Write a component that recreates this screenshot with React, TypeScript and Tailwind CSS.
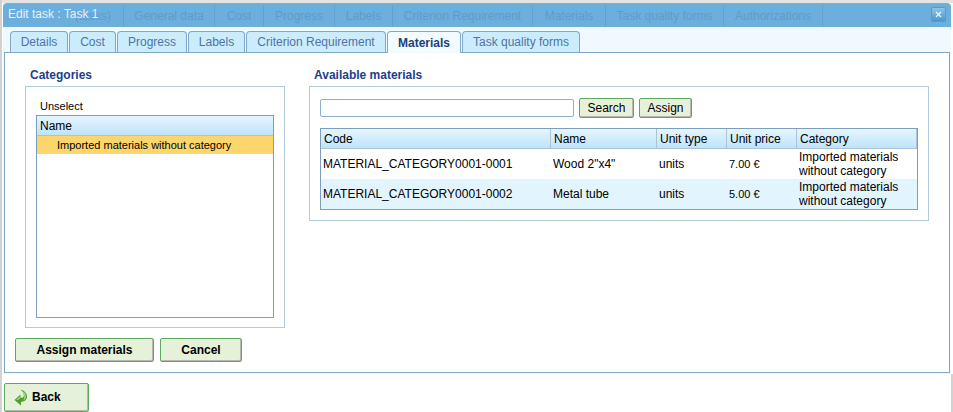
const ghostTabs = [
  { label: "(tasks)", width: "w-[121px]", align: "justify-end pr-[12px]" },
  { label: "General data", width: "w-[91px]", align: "justify-center" },
  { label: "Cost", width: "w-[49px]", align: "justify-center" },
  { label: "Progress", width: "w-[71px]", align: "justify-center" },
  { label: "Labels", width: "w-[58px]", align: "justify-center" },
  { label: "Criterion Requirement", width: "w-[140px]", align: "justify-center" },
  { label: "Materials", width: "w-[73px]", align: "justify-center" },
  { label: "Task quality forms", width: "w-[118px]", align: "justify-center" },
  { label: "Authorizations", width: "w-[99px]", align: "justify-center" },
];

const tabs = [
  { label: "Details", width: "w-[58px]" },
  { label: "Cost", width: "w-[47px]" },
  { label: "Progress", width: "w-[70px]" },
  { label: "Labels", width: "w-[57px]" },
  { label: "Criterion Requirement", width: "w-[140px]" },
  { label: "Materials", width: "w-[74px]", active: true },
  { label: "Task quality forms", width: "w-[118px]" },
];

const materials = [
  { code: "MATERIAL_CATEGORY0001-0001", name: 'Wood 2"x4"', unit: "units", price: "7.00 €" },
  { code: "MATERIAL_CATEGORY0001-0002", name: "Metal tube", unit: "units", price: "5.00 €" },
];

const headCell =
  "border-r border-b border-[#a9c3dc] bg-gradient-to-b from-[#e6f5fe] to-[#bfe3f9] px-[3px] text-left font-normal text-black";

function GreenButton({ label, className }: { label: string; className: string }) {
  return (
    <button
      type="button"
      className={`rounded-[2px] border border-[#5fa85f] bg-[#e6f1da] pb-px text-center text-black shadow-[inset_-1px_-1px_0_#b4b8ae] ${className}`}
    >
      {label}
    </button>
  );
}

function BackIcon() {
  return (
    <svg width="14" height="17" viewBox="0 0 14 17" className="shrink-0">
      <path
        d="M6.500 0.500 C10.500 1.500 13.500 4.500 13 8.500 C12.500 11.500 9.500 13 7 12.800 L7 16.500 L0.500 11 L6.500 5.500 L6.500 8.800 C8.800 9.200 10.200 7.800 9.800 5.500 C9.400 3.500 8 1.800 6.500 0.500 Z"
        fill="#4e9e2c"
      />
      <path d="M7.500 1.500 C10.500 2.800 12.300 5 12 8 C11.700 9.800 10.500 11 9 11.500 C10.800 9.500 11.300 5.500 7.500 1.500 Z" fill="#a5d982" />
      <path d="M2 11 L6 7.500 L6 9.500 L4 11 Z" fill="#a5d982" />
    </svg>
  );
}

export default function App() {
  return (
    <div className="flex h-[412px] w-[953px] overflow-hidden bg-white font-['Liberation_Sans',Arial,sans-serif] text-[12px] text-black">
      <div className="h-full w-[2px] shrink-0 bg-[#d2d2d2]" />
      <div className="w-[951px] shrink-0">
        <div className="h-[3px] bg-[#e4e4e4]" />
        <div className="ml-px flex h-[371px] w-[948px] flex-col rounded-t-[4px] border-t border-[#8fa9bd] bg-[#f0f9ff]">
          <div className="relative flex h-[23px] shrink-0 items-stretch rounded-t-[3px] bg-[#6caedc] pt-px text-[#5d9dcb]">
            {ghostTabs.map((tab) => (
              <div key={tab.label} className={`flex items-center whitespace-nowrap border-r border-[#659fcd] ${tab.width} ${tab.align}`}>
                {tab.label}
              </div>
            ))}
            <span className="absolute left-[5px] top-[1px] leading-[18px] text-[#e4f2fb]">Edit task : Task 1</span>
            <span className="absolute right-[5px] top-[3px] flex h-[15px] w-[15px] items-center justify-center rounded-[2px] border border-[#5a98c6] bg-gradient-to-b from-[#8cc3e8] to-[#4a97d3]">
              <svg width="7" height="7" viewBox="0 0 7 7">
                <path d="M1 1 L6 6 M6 1 L1 6" stroke="#f2fbff" strokeWidth="1.200" />
              </svg>
            </span>
          </div>

          <div className="flex h-[25px] shrink-0 items-end gap-px pl-[7px]">
            {tabs.map((tab) => (
              <div
                key={tab.label}
                className={`flex h-[21px] items-center justify-center rounded-t-[4px] border border-b-0 border-[#7fa9c9] ${tab.width} ${
                  tab.active
                    ? "relative top-px h-[22px] bg-[#f2fbff] font-bold text-[#1d3f7a]"
                    : "bg-[#cbecfd] text-[#4f74a3]"
                }`}
              >
                {tab.label}
              </div>
            ))}
          </div>

          <div className="ml-px flex h-[321px] w-[946px] shrink-0 flex-col border border-[#7fa9c9] bg-white pl-[10px]">
            <div className="flex gap-[24px] pt-[14px]">
              <section className="ml-[10px] w-[260px]">
                <h2 className="h-[19px] pl-[5px] font-bold leading-[17px] text-[#1d3f8a]">Categories</h2>
                <div className="h-[242px] border border-[#b2cbd8] px-[10px] pt-[11px]">
                  <div className="pl-[4px] text-[11px] leading-[17px]">Unselect</div>
                  <div className="h-[203px] border border-[#7d9ebd]">
                    <div className="flex h-[20px] items-center border-b border-[#a9c3dc] bg-gradient-to-b from-[#e6f5fe] to-[#bfe3f9] pl-[3px]">
                      Name
                    </div>
                    <div className="flex h-[18px] items-center bg-[#fdd56d] pl-[20px] text-[11px]">Imported materials without category</div>
                  </div>
                </div>
              </section>

              <section className="w-[620px]">
                <h2 className="h-[19px] pl-[5px] font-bold leading-[17px] text-[#1d3f8a]">Available materials</h2>
                <div className="h-[135px] border border-[#b2cbd8] px-[10px] pt-[11px]">
                  <div className="flex h-[20px] items-center gap-[5px]">
                    <input type="text" className="h-[18px] w-[254px] rounded-[2px] border border-[#8fb0cc] bg-white" />
                    <GreenButton label="Search" className="h-[20px] w-[55px]" />
                    <GreenButton label="Assign" className="h-[20px] w-[53px]" />
                  </div>
                  <table className="mt-[10px] w-[598px] table-fixed border-separate border-spacing-0 border border-[#7d9ebd]">
                    <thead>
                      <tr className="h-[20px]">
                        <th className={`w-[230px] ${headCell}`}>Code</th>
                        <th className={`w-[106px] ${headCell}`}>Name</th>
                        <th className={`w-[70px] ${headCell}`}>Unit type</th>
                        <th className={`w-[70px] ${headCell}`}>Unit price</th>
                        <th className={headCell}>Category</th>
                      </tr>
                    </thead>
                    <tbody>
                      {materials.map((material, index) => (
                        <tr key={material.code} className={`h-[30px] ${index % 2 ? "bg-[#e2f5fe]" : "bg-white"}`}>
                          <td className="px-[2px]">{material.code}</td>
                          <td className="px-[2px]">{material.name}</td>
                          <td className="px-[2px]">{material.unit}</td>
                          <td className="px-[2px] text-[11px]">{material.price}</td>
                          <td className="px-[2px] leading-[14px]">Imported materials without category</td>
                        </tr>
                      ))}
                    </tbody>
                  </table>
                </div>
              </section>
            </div>

            <div className="mt-[10px] flex gap-[6px] font-bold">
              <GreenButton label="Assign materials" className="h-[24px] w-[139px]" />
              <GreenButton label="Cancel" className="h-[24px] w-[82px]" />
            </div>
          </div>
        </div>
        <div className="flex justify-between">
          <div className="pl-[2px] pt-[9px]">
            <button
              type="button"
              className="flex h-[29px] w-[85px] items-center gap-[4px] rounded-[2px] border border-[#5fa85f] bg-[#e6f1da] pb-px pl-[9px] font-bold shadow-[inset_-1px_-1px_0_#b4b8ae]"
            >
              <BackIcon />
              Back
            </button>
          </div>
          <div className="h-[38px] w-[2px] bg-[#d2d2d2]" />
        </div>
      </div>
    </div>
  );
}
